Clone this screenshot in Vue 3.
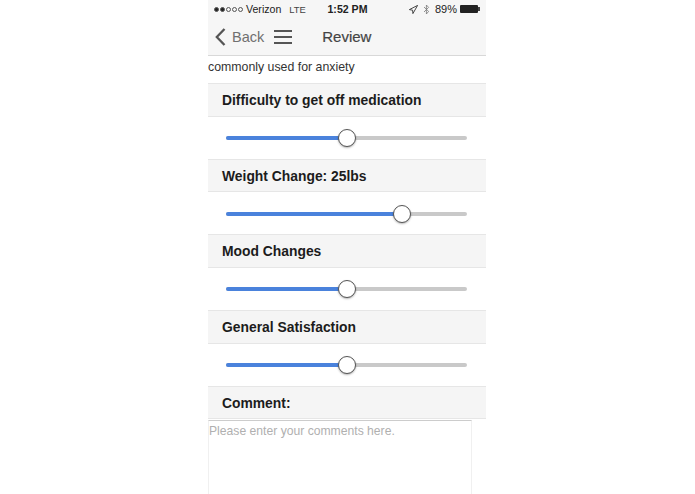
<script setup>
const sliders = [
  { label: 'Difficulty to get off medication', value: 50 },
  { label: 'Weight Change: 25lbs', value: 73 },
  { label: 'Mood Changes', value: 50 },
  { label: 'General Satisfaction', value: 50 },
]
</script>

<template>
  <div class="page">
    <div class="phone">
      <header class="top">
        <div class="status">
          <div class="left">
            <span class="dots"><i class="on"></i><i class="on"></i><i></i><i></i><i></i></span>
            <span class="carrier">Verizon</span>
            <span class="lte">LTE</span>
          </div>
          <span class="time">1:52 PM</span>
          <div class="right">
            <svg class="loc" width="9" height="9" viewBox="0 0 9 9"><path d="M8.6.4 3.9 8.6 3.6 5.2.4 4.6Z" fill="none" stroke="#333" stroke-width=".9"/></svg>
            <svg class="bt" width="7" height="11" viewBox="0 0 7 11"><path d="M1 3 5.6 7.4 3.4 10V1L5.6 3.4 1 8" fill="none" stroke="#777" stroke-width=".8"/></svg>
            <span class="pct">89%</span>
            <span class="battery"><span class="fill"></span></span>
          </div>
        </div>
        <nav class="nav">
          <svg class="chev" width="11" height="18" viewBox="0 0 11 18"><path d="M9.5 1 1.8 9l7.7 8" fill="none" stroke="#555" stroke-width="2.3"/></svg>
          <span class="back">Back</span>
          <span class="burger"><i></i><i></i><i></i></span>
          <span class="title">Review</span>
        </nav>
      </header>
      <p class="intro">commonly used for anxiety</p>
      <section v-for="s in sliders" :key="s.label" class="block">
        <h3 class="head">{{ s.label }}</h3>
        <div class="row">
          <div class="track">
            <div class="done" :style="{ width: s.value + '%' }"></div>
          </div>
        </div>
      </section>
      <h3 class="head">Comment:</h3>
      <div class="box">Please enter your comments here.</div>
    </div>
  </div>
</template>

<style>
html, body { margin: 0; background: #fff; }
</style>

<style scoped>
.page { width: 695px; height: 494px; overflow: hidden; background: #fff; font-family: "Liberation Sans", Arial, sans-serif; }
.phone { width: 278px; margin-left: 208px; }
.top { height: 55px; background: #f6f6f6; border-bottom: 1px solid #d8d8d8; }
.status { height: 18px; display: grid; grid-template-columns: 1fr auto 1fr; align-items: center; font-size: 11px; color: #222; padding: 0 5px 0 6px; }
.left, .right { display: flex; align-items: center; }
.right { justify-content: flex-end; }
.dots { display: flex; gap: 1px; margin-right: 3px; }
.dots i { width: 5px; height: 5px; border-radius: 50%; border: 0.6px solid #555; box-sizing: border-box; }
.dots i.on { background: #222; }
.carrier { font-size: 10.6px; }
.lte { margin-left: 8px; font-size: 9.4px; color: #444; }
.time { font-weight: 700; font-size: 10.6px; }
.loc { margin-right: 5px; }
.bt { margin-right: 5px; }
.pct { margin-right: 3px; }
.battery { width: 18px; height: 8px; margin-right: 3px; background: #222; border-radius: 1px; position: relative; display: block; }
.battery .fill { position: absolute; left: 18px; top: 2px; width: 1.5px; height: 4px; background: #444; }
.nav { height: 37px; display: flex; align-items: center; color: #666; }
.chev { margin-left: 7px; }
.back { font-size: 14.5px; margin-left: 6px; color: #707070; }
.burger { display: flex; flex-direction: column; gap: 4px; margin-left: 10px; }
.burger i { width: 18px; height: 2px; background: #555; display: block; }
.title { margin-left: 30px; font-size: 15px; font-weight: 400; color: #444; -webkit-text-stroke: 0.2px #444; }
.intro { margin: 0; height: 27px; line-height: 22px; font-size: 12.33px; color: #333; }
.head { margin: 0; height: 33.67px; box-sizing: border-box; background: #f5f5f5; border-top: 1px solid #e6e6e6; border-bottom: 1px solid #e6e6e6; padding-left: 14px; line-height: 32px; font-size: 13.86px; font-weight: 700; color: #1c1c1c; }
.row { height: 42px; box-sizing: border-box; padding: 19.5px 19px 0 18px; }
.track { height: 4px; background: #c9c9c9; border-radius: 2px; }
.done { height: 4px; background: #4a82dc; border-radius: 2px; position: relative; }
.done::after { content: ""; position: absolute; right: -9px; top: -7px; width: 18px; height: 18px; box-sizing: border-box; border-radius: 50%; background: #fff; border: 1.5px solid #555; box-shadow: 0 1px 2px rgba(0,0,0,.3); }
.box { width: 264px; height: 90px; margin-top: 1px; box-sizing: border-box; border: 1px solid #f0f0f0; border-top: 1px solid #ccc; font-size: 12.17px; color: #b0b0b0; padding: 3px 0 0 0; }
</style>
